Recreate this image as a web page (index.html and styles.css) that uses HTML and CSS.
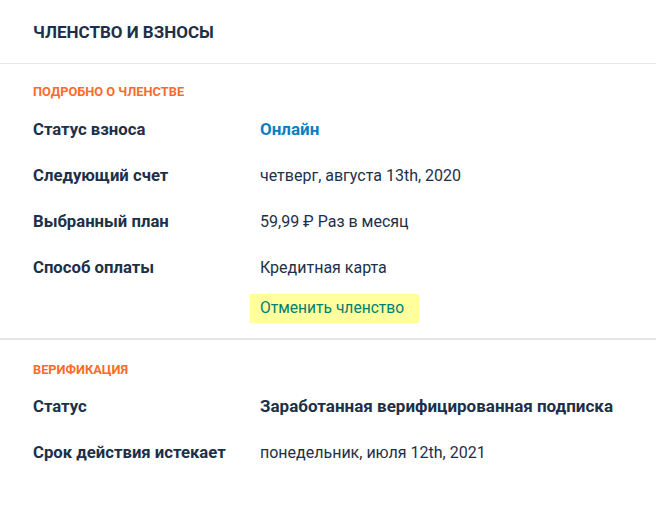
FILE: index.html
```html
<!DOCTYPE html>
<html lang="ru">
<head>
<meta charset="utf-8">
<link rel="stylesheet" href="styles.css">
</head>
<body>
<div class="page">
  <header class="header">
    <h1 class="title">Членство и взносы</h1>
  </header>
  <section class="section section-first">
    <h2 class="section-label">Подробно о членстве</h2>
    <div class="rows">
      <div class="row"><div class="key">Статус взноса</div><div class="val val-online">Онлайн</div></div>
      <div class="row"><div class="key">Следующий счет</div><div class="val">четверг, августа 13th, 2020</div></div>
      <div class="row"><div class="key">Выбранный план</div><div class="val">59,99 ₽ Раз в месяц</div></div>
      <div class="row"><div class="key">Способ оплаты</div><div class="val">Кредитная карта</div></div>
      <div class="row-action"><a class="cancel" href="#">Отменить членство</a></div>
    </div>
  </section>
  <section class="section section-second">
    <h2 class="section-label">Верификация</h2>
    <div class="rows">
      <div class="row"><div class="key">Статус</div><div class="val val-strong">Заработанная верифицированная подписка</div></div>
      <div class="row"><div class="key">Срок действия истекает</div><div class="val">понедельник, июля 12th, 2021</div></div>
    </div>
  </section>
</div>
</body>
</html>
```
FILE: styles.css
```css
* { box-sizing: border-box; }
html, body { margin: 0; padding: 0; background: #fff; }
body {
  font-family: "Roboto", "Liberation Sans", sans-serif;
  color: #1c3048;
  width: 656px;
  height: 510px;
  overflow: hidden;
}
.header {
  height: 64px;
  padding: 0 33px;
  display: flex;
  align-items: center;
  border-bottom: 1px solid #e6e6e6;
}
.title {
  margin: 0;
  font-size: 17px;
  font-weight: 700;
  text-transform: uppercase;
}
.section { padding: 21px 33px 0; }
.section-first { padding-bottom: 15px; border-bottom: 2px solid #e6e6e6; }
.section-second { padding-top: 23px; }
.section-second .rows { padding-top: 6px; }
.section-label {
  margin: 0;
  font-size: 12.8px;
  line-height: 14px;
  font-weight: 700;
  text-transform: uppercase;
  color: #ff6a2a;
}
.rows { padding-top: 7px; }
.row {
  display: grid;
  grid-template-columns: 227px 1fr;
  align-items: center;
  height: 46px;
  font-size: 16.7px;
}
.key { font-weight: 700; }
.val { font-weight: 400; font-size: 16px; }
.val-online { color: #0a7fc0; font-weight: 700; font-size: 17px; }
.val-strong { font-weight: 700; font-size: 17px; }
.row-action { padding: 4px 0 0 217px; }
.cancel {
  display: inline-block;
  background: #ffff9e;
  color: #00806a;
  text-decoration: none;
  font-size: 15.6px;
  line-height: 29px;
  padding: 0 15px 0 10px;
}
```
